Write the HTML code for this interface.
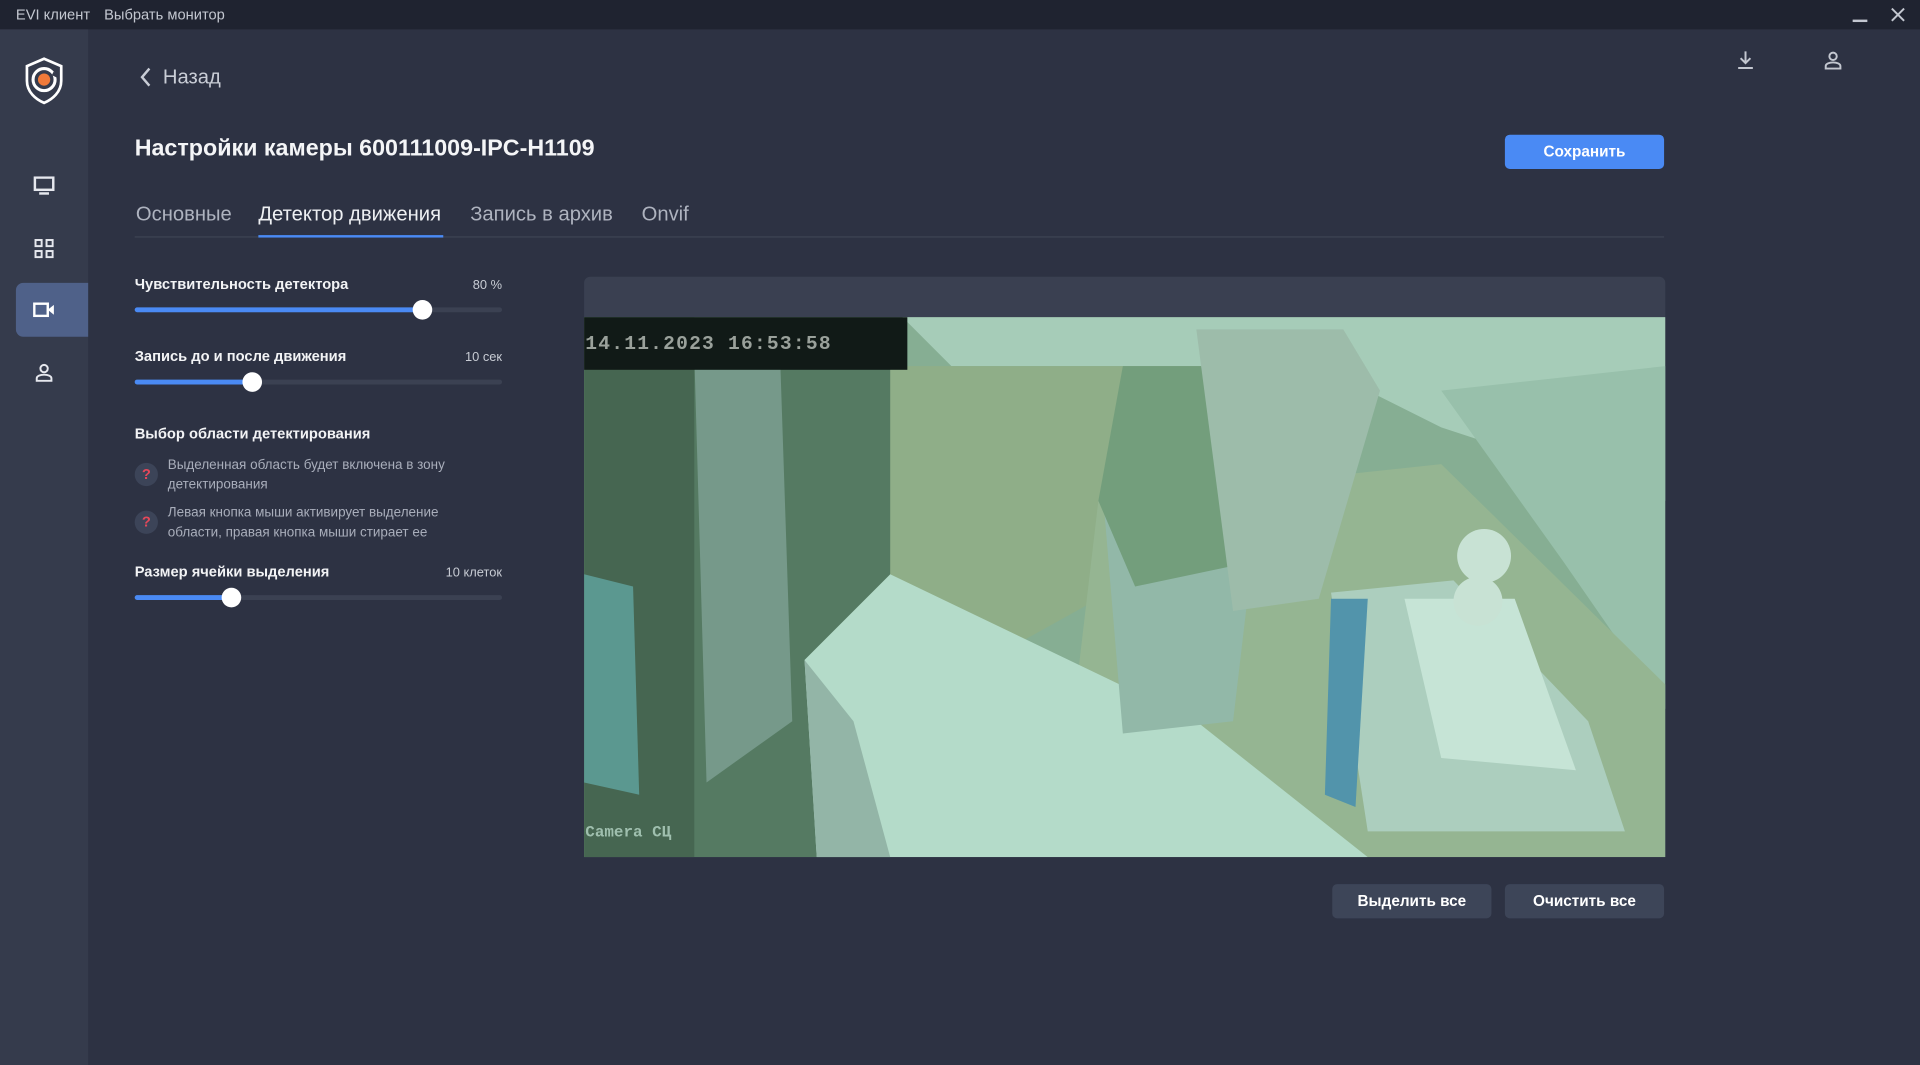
<!DOCTYPE html>
<html><head><meta charset="utf-8">
<style>
html,body{margin:0;padding:0;width:1920px;height:1065px;overflow:hidden;background:#2d3243;}
#w{position:absolute;left:0;top:0;width:1568px;height:870px;transform:scale(1.22449);transform-origin:0 0;background:#2d3243;font-family:"Liberation Sans","DejaVu Sans",sans-serif;color:#fff;}
.a{position:absolute;}
.tb{left:0;top:0;width:1568px;height:24px;background:#1f2330;}
.tb span{position:absolute;top:5px;font-size:12px;color:#c3c7d0;}
.sb{left:0;top:24px;width:72px;height:846px;background:#353b4c;}
.lbl{font-size:12px;font-weight:bold;color:#f2f3f5;}
.val{font-size:10.5px;color:#c8ccd4;text-align:right;width:100px;}
.tr{height:4px;border-radius:2px;background:#3b4152;width:300px;left:110px;}
.fill{position:absolute;left:0;top:0;height:4px;border-radius:2px;background:#4a8af4;}
.kn{position:absolute;top:-6px;width:16px;height:16px;border-radius:50%;background:#fff;margin-left:-8px;}
.q{width:19px;height:19px;border-radius:50%;background:#3c4458;color:#e5485a;font-size:12px;font-weight:bold;text-align:center;line-height:19px;}
.ht{font-size:11px;color:#a9aebb;line-height:16px;}
.btn{height:28px;border-radius:4px;font-size:12.5px;font-weight:bold;text-align:center;line-height:28px;}
</style></head><body><div id="w">
<div class="a tb"><span style="left:13px">EVI клиент</span><span style="left:85px">Выбрать монитор</span>
<div class="a" style="left:1513px;top:16px;width:12px;height:2px;background:#c3c7d0"></div>
<svg class="a" style="left:1544px;top:6px" width="12" height="12" viewBox="0 0 12 12"><path d="M1 1L11 11M11 1L1 11" stroke="#c3c7d0" stroke-width="1.6"/></svg>
</div>
<div class="a sb">
<svg class="a" style="left:19px;top:22px" width="34" height="40" viewBox="0 0 34 40"><path d="M17 2L31 8V20C31 29 24 35 17 38C10 35 3 29 3 20V8Z" fill="none" stroke="#fff" stroke-width="2.2"/><circle cx="17" cy="19" r="9" fill="none" stroke="#fff" stroke-width="2.5"/><circle cx="17" cy="19" r="5" fill="#f07a3a"/><path d="M24 14L28 16" stroke="#353b4c" stroke-width="3"/></svg>
<svg class="a" style="left:27px;top:120px" width="18" height="16" viewBox="0 0 18 16"><rect x="1.5" y="1" width="15" height="10" fill="none" stroke="#e6e8ee" stroke-width="2"/><rect x="5" y="13" width="8" height="2" fill="#e6e8ee"/></svg>
<svg class="a" style="left:28px;top:171px" width="16" height="16" viewBox="0 0 16 16" fill="none" stroke="#e6e8ee" stroke-width="1.6"><rect x="1" y="1" width="5" height="5"/><rect x="10" y="1" width="5" height="5"/><rect x="1" y="10" width="5" height="5"/><rect x="10" y="10" width="5" height="5"/></svg>
<div class="a" style="left:13px;top:207px;width:59px;height:44px;background:#4f6189;border-radius:6px 0 0 6px"></div>
<svg class="a" style="left:27px;top:223px" width="18" height="12" viewBox="0 0 18 12"><rect x="1" y="1" width="11" height="10" fill="none" stroke="#fff" stroke-width="2"/><path d="M12 6L17 2V10Z" fill="#fff"/></svg>
<svg class="a" style="left:28px;top:272px" width="16" height="16" viewBox="0 0 16 16" fill="none" stroke="#e6e8ee" stroke-width="1.6"><circle cx="8" cy="5" r="3"/><path d="M2 15V13C2 11 5 10 8 10S14 11 14 13V15Z"/></svg>
</div>
<svg class="a" style="left:113px;top:55px" width="12" height="16" viewBox="0 0 12 16"><path d="M9 1L3 8L9 15" fill="none" stroke="#c9cdd6" stroke-width="2"/></svg>
<div class="a" style="left:133px;top:54px;font-size:16.5px;color:#c9cdd6">Назад</div>
<svg class="a" style="left:1418px;top:41px" width="15" height="16" viewBox="0 0 15 16" fill="none" stroke="#c3c7d0" stroke-width="1.6"><path d="M7.5 1V10M3.5 6.5L7.5 10.5L11.5 6.5"/><path d="M1.5 14.5H13.5"/></svg>
<svg class="a" style="left:1489px;top:41px" width="16" height="16" viewBox="0 0 16 16" fill="none" stroke="#c3c7d0" stroke-width="1.6"><circle cx="8" cy="5" r="3"/><path d="M2 15V13C2 11 5 10 8 10S14 11 14 13V15Z"/></svg>
<div class="a" style="left:110px;top:111px;font-size:19px;font-weight:bold;color:#f4f5f7">Настройки камеры 600111009-IPC-H1109</div>
<div class="a btn" style="left:1229px;top:110px;width:130px;background:#4a8af4;font-weight:bold">Сохранить</div>
<div class="a" style="left:110px;top:193px;width:1249px;height:1px;background:#3e4455"></div>
<div class="a" style="left:211px;top:192px;width:151px;height:2px;background:#4a8af4"></div>
<div class="a" style="left:111px;top:166px;font-size:16.5px;color:#aeb3bf">Основные</div>
<div class="a" style="left:211px;top:166px;font-size:16.5px;color:#eef0f3">Детектор движения</div>
<div class="a" style="left:384px;top:166px;font-size:16.5px;color:#aeb3bf">Запись в архив</div>
<div class="a" style="left:524px;top:166px;font-size:16.5px;color:#aeb3bf">Onvif</div>

<div class="a lbl" style="left:110px;top:225px">Чувствительность детектора</div>
<div class="a val" style="left:310px;top:227px">80 %</div>
<div class="a tr" style="top:251px"><div class="fill" style="width:235px"></div><div class="kn" style="left:235px"></div></div>
<div class="a lbl" style="left:110px;top:284px">Запись до и после движения</div>
<div class="a val" style="left:310px;top:286px">10 сек</div>
<div class="a tr" style="top:310px"><div class="fill" style="width:96px"></div><div class="kn" style="left:96px"></div></div>
<div class="a lbl" style="left:110px;top:347px">Выбор области детектирования</div>
<div class="a q" style="left:110px;top:378px">?</div>
<div class="a ht" style="left:137px;top:372px">Выделенная область будет включена в зону<br>детектирования</div>
<div class="a q" style="left:110px;top:417px">?</div>
<div class="a ht" style="left:137px;top:411px">Левая кнопка мыши активирует выделение<br>области, правая кнопка мыши стирает ее</div>
<div class="a lbl" style="left:110px;top:460px">Размер ячейки выделения</div>
<div class="a val" style="left:310px;top:462px">10 клеток</div>
<div class="a tr" style="top:486px"><div class="fill" style="width:79px"></div><div class="kn" style="left:79px"></div></div>

<div class="a" style="left:477px;top:226px;width:883px;height:33px;background:#3a4051;border-radius:5px 5px 0 0"></div>
<svg class="a" style="left:477px;top:259px" width="883" height="441" viewBox="0 0 883 441">
<rect width="883" height="441" fill="#86ae93"/>
<polygon points="260,0 883,0 883,150 700,90 600,40 300,40" fill="#a6ccb8"/>
<polygon points="700,60 883,40 883,320 800,200" fill="#98c0ab"/>
<polygon points="240,40 600,40 560,120 470,150 420,230 330,280 240,300" fill="#8fae88"/>
<polygon points="420,150 700,120 883,300 883,441 560,441 400,320" fill="#95b592"/>
<rect x="0" y="0" width="250" height="441" fill="#557a62"/>
<rect x="0" y="0" width="90" height="441" fill="#466651"/>
<polygon points="90,30 160,30 170,330 100,380" fill="#76998a"/>
<polygon points="0,210 40,220 45,390 0,380" fill="#5b9890"/>
<polygon points="180,280 250,210 500,330 640,441 190,441" fill="#b4dbc9"/>
<polygon points="180,280 190,441 250,441 220,330" fill="#93b5a7"/>
<polygon points="425,160 550,160 530,330 440,340" fill="#92b8a8"/>
<polygon points="440,40 550,40 545,200 450,220 420,150" fill="#739e7c"/>
<polygon points="500,10 620,10 650,60 600,230 530,240" fill="#9dbcaa"/>
<polygon points="610,225 710,215 820,330 850,420 640,420" fill="#accebe"/>
<polygon points="670,230 760,230 810,370 700,360" fill="#c6e4d6"/>
<polygon points="610,230 640,230 630,400 605,390" fill="#5294ab"/>
<circle cx="735" cy="195" r="22" fill="#c8e2d4"/>
<circle cx="730" cy="232" r="20" fill="#c8e2d4"/>
<rect x="0" y="0" width="264" height="43" fill="#111a17"/>
<text x="1" y="26" font-family="Liberation Mono,monospace" font-size="16" font-weight="bold" fill="#9aa19b" letter-spacing="1">14.11.2023 16:53:58</text>
<text x="1" y="424" font-family="Liberation Mono,monospace" font-size="13" font-weight="bold" fill="#9fbfae">Camera СЦ</text>
</svg>
<div class="a btn" style="left:1088px;top:722px;width:130px;background:#3d4558">Выделить все</div>
<div class="a btn" style="left:1229px;top:722px;width:130px;background:#3d4558">Очистить все</div>
</div></body></html>
